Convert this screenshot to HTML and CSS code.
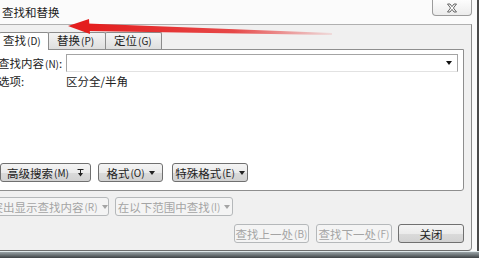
FILE: index.html
```html
<!DOCTYPE html>
<html lang="zh-CN">
<head>
    <meta charset="UTF-8">
    <title>查找和替换</title>
    <link rel="stylesheet" href="styles.css">
</head>
<body>
    <div class="screen">
        <div class="window">
            <div class="titlebar">
                <span class="title">查找和替换</span>
                <div class="close-x">
                    <svg width="12" height="10" viewBox="0 0 12 10">
                        <path d="M1.5 1 L4 1 L6 3.6 L8 1 L10.5 1 L7.4 5 L10.5 9 L8 9 L6 6.4 L4 9 L1.5 9 L4.6 5 Z" fill="#fff" stroke="#555" stroke-width="0.9"/>
                    </svg>
                </div>
            </div>

            <div class="client">
                <div class="tabs">
                    <div class="tab active">查找<span class="key">(D)</span></div>
                    <div class="tab">替换<span class="key">(P)</span></div>
                    <div class="tab">定位<span class="key">(G)</span></div>
                </div>

                <div class="panel">
                    <div class="field-row">
                        <label class="field-label">查找内容<span class="key">(N)</span>:</label>
                        <div class="combo"><span class="combo-arrow"></span></div>
                    </div>
                    <div class="option-row">
                        <span class="field-label">选项:</span>
                        <span>区分全/半角</span>
                    </div>
                    <div class="btn-row">
                        <button class="btn btn-more">高级搜索<span class="key">(M)</span>
                            <svg class="more-icon" width="7" height="8" viewBox="0 0 7 8">
                                <path d="M0.5 0.5 H6.5" stroke="#222" stroke-width="1"/>
                                <path d="M3.5 1 V5" stroke="#222" stroke-width="1"/>
                                <path d="M1 4 L3.5 7.5 L6 4 Z" fill="#222"/>
                            </svg>
                        </button>
                        <button class="btn btn-format">格式<span class="key">(O)</span><span class="drop"></span></button>
                        <button class="btn btn-special">特殊格式<span class="key">(E)</span><span class="drop"></span></button>
                    </div>
                </div>

                <div class="row-disabled">
                    <button class="btn disabled btn-highlight">突出显示查找内容<span class="key">(R)</span><span class="drop"></span></button>
                    <button class="btn disabled btn-range">在以下范围中查找<span class="key">(I)</span><span class="drop"></span></button>
                </div>

                <div class="row-actions">
                    <button class="btn disabled btn-prev">查找上一处<span class="key">(B)</span></button>
                    <button class="btn disabled btn-next">查找下一处<span class="key">(F)</span></button>
                    <button class="btn btn-close">关闭</button>
                </div>
            </div>
        </div>
        <div class="gap"></div>
        <div class="edge"></div>
    </div>
    <div class="taskbar"></div>

    <!-- red annotation arrow over the title -->
    <svg class="arrow" width="479" height="60" viewBox="0 0 479 60">
        <defs>
            <linearGradient id="fade" x1="0" y1="0" x2="1" y2="0">
                <stop offset="0" stop-color="#e41e1e" stop-opacity="1"/>
                <stop offset="0.6" stop-color="#e41e1e" stop-opacity="0.8"/>
                <stop offset="1" stop-color="#e41e1e" stop-opacity="0.1"/>
            </linearGradient>
        </defs>
        <path d="M87 23.5 L87 31 L332 35 L332 33 Z" fill="url(#fade)"/>
        <path d="M68 26 L89 19 L90 34 Z" fill="#e41e1e"/>
    </svg>
</body>
</html>
```

FILE: styles.css
```css
body {
    margin: 0;
    width: 479px;
    height: 258px;
    overflow: hidden;
    background: #fff;
    font-family: "Noto Sans CJK SC", "Liberation Sans", sans-serif;
    font-size: 12px;
    color: #222;
    position: relative;
}
.screen {
    display: flex;
}
.window {
    width: 472px;
    flex: none;
}
.gap {
    width: 5px;
    background: #fafafa;
}
.edge {
    width: 2px;
    background: #4a4a4a;
}
.titlebar {
    height: 24px;
    display: flex;
    justify-content: space-between;
    align-items: flex-start;
    background: #fbfbfb;
}
.title {
    margin-left: 2px;
    line-height: 24px;
    font-size: 11.5px;
}
.close-x {
    width: 40px;
    height: 16px;
    box-sizing: border-box;
    border: 1px solid #9c9c9c;
    border-top: none;
    border-radius: 0 0 4px 4px;
    background: linear-gradient(#fdfdfd, #ececec);
    display: flex;
    align-items: center;
    justify-content: center;
}
.client {
    height: 227px;
    box-sizing: border-box;
    border-top: 1px solid #b0b0b0;
    border-right: 1px solid #8a8a8a;
    border-bottom: 1px solid #6c6c6c;
    border-bottom-right-radius: 4px;
    background: #f0f0f0;
    padding: 7px 7px 0 0;
}
.key {
    font-size: 10px;
    margin-left: 1px;
}
.tabs {
    display: flex;
    align-items: flex-end;
    margin-left: -1px;
}
.tab {
    height: 17px;
    box-sizing: border-box;
    border: 1px solid #8c8c8c;
    border-bottom: none;
    border-radius: 2px 2px 0 0;
    background: linear-gradient(#f4f4f4, #dedede);
    line-height: 15px;
    font-size: 11.5px;
    padding-left: 4px;
    margin-left: -1px;
}
.tab:nth-child(1) { width: 50px; margin-left: 0; }
.tab:nth-child(2) { width: 58px; padding-left: 8px; }
.tab:nth-child(3) { width: 57px; padding-left: 8px; }
.tab.active {
    height: 18px;
    margin-bottom: -1px;
    background: #fff;
    position: relative;
    z-index: 1;
    padding-left: 3px;
}
.panel {
    height: 142px;
    box-sizing: border-box;
    margin-left: -1px;
    border: 1px solid #8e8e8e;
    border-radius: 0 0 3px 0;
    background: #fff;
    padding: 4px 0 8px 0;
    display: flex;
    flex-direction: column;
}
.field-row {
    display: flex;
    align-items: center;
    height: 18px;
}
.field-label {
    width: 68px;
    margin-left: -2px;
    flex: none;
    font-size: 11.5px;
}
.combo {
    width: 392px;
    height: 18px;
    box-sizing: border-box;
    border: 1px solid #a4a4a4;
    border-bottom-color: #e2e2e2;
    display: flex;
    align-items: center;
    justify-content: flex-end;
}
.combo-arrow {
    width: 0;
    height: 0;
    border-left: 3.5px solid transparent;
    border-right: 3.5px solid transparent;
    border-top: 4px solid #111;
    margin-right: 5px;
}
.option-row {
    display: flex;
    align-items: center;
    height: 14px;
    margin-top: 2px;
    font-size: 11.5px;
}
.btn-row {
    margin-top: auto;
    display: flex;
}
.btn {
    height: 19px;
    box-sizing: border-box;
    border: 1px solid #707070;
    border-radius: 3px;
    background: linear-gradient(#f4f4f4 0%, #ebebeb 50%, #dadada 51%, #d2d2d2 100%);
    font-family: inherit;
    font-size: 11.5px;
    color: #222;
    padding: 0;
    white-space: nowrap;
    display: flex;
    align-items: center;
    justify-content: center;
    flex: none;
}
.btn.disabled {
    border-color: #b5b8ba;
    background: #f4f4f4;
    color: #a4a4a4;
}
.drop {
    width: 0;
    height: 0;
    border-left: 3px solid transparent;
    border-right: 3px solid transparent;
    border-top: 4px solid #222;
    margin-left: 4px;
}
.btn.disabled .drop {
    border-top-color: #a4a4a4;
}
.more-icon {
    margin-left: 8px;
}
.btn-more { width: 91px; }
.btn-format { width: 65px; margin-left: 7px; }
.btn-special { width: 76px; margin-left: 9px; }
.row-disabled {
    display: flex;
    margin-top: 6px;
}
.btn-highlight { width: 119px; margin-left: -10px; }
.btn-range { width: 118px; margin-left: 6px; }
.row-actions {
    display: flex;
    justify-content: flex-end;
    margin-top: 8px;
}
.btn-prev { width: 75px; }
.btn-next { width: 76px; margin-left: 7px; }
.btn-close { width: 66px; margin-left: 6px; }
.taskbar {
    height: 7px;
    border-top: 1px solid #dfe8ea;
    background: linear-gradient(#9aa4a8, #2e3234);
}
.arrow {
    position: absolute;
    left: 0;
    top: 0;
}
```
